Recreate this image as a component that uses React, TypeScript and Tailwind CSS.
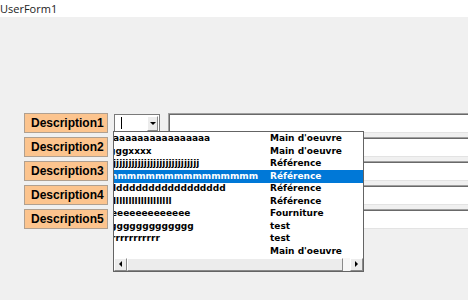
import React from "react";

const rows = [
  { left: "aaaaaaaaaaaaaaaa", shift: "-ml-[1px]", right: "Main d'oeuvre" },
  { left: "gggxxxx", shift: "-ml-[5px]", right: "Main d'oeuvre" },
  { left: "jjjjjjjjjjjjjjjjjjjjjjjjjjjj", shift: "-ml-[1px]", right: "Référence" },
  { left: "mmmmmmmmmmmmmmmm", shift: "-ml-[6px]", right: "Référence", selected: true },
  { left: "lddddddddddddddddd", shift: "-ml-[1px]", right: "Référence" },
  { left: "lllllllllllllllllll", shift: "-ml-[1px]", right: "Référence" },
  { left: "eeeeeeeeeeeee", shift: "-ml-[3px]", right: "Fourniture" },
  { left: "ggggggggggggg", shift: "-ml-[4px]", right: "test" },
  { left: "rrrrrrrrrrr", shift: "-ml-[3px]", right: "test" },
  { left: "", shift: "", right: "Main d'oeuvre" },
];

function Label({ text }: { text: string }) {
  return (
    <div className="w-[84px] h-[20px] shrink-0 bg-[#fcc48e] border border-[#b0a090] pl-[6px] flex items-center font-['Liberation_Sans',Arial,sans-serif] font-bold text-[12px] text-black">
      {text}
    </div>
  );
}

function TextBox() {
  return (
    <div className="w-[320px] h-[20px] shrink-0 bg-white border-t border-l border-t-[#a0a0a0] border-l-[#a0a0a0] border-b border-r border-b-[#e3e3e3] border-r-[#e3e3e3] shadow-[inset_1px_1px_0_#696969]" />
  );
}

export default function App() {
  return (
    <div className="w-[468px] h-[300px] overflow-hidden flex flex-col">
      {/* title bar */}
      <div className="h-[17px] bg-white flex items-center font-['Open_Sans','Noto_Sans',sans-serif] text-[11px] text-[#222] leading-none">
        UserForm1
      </div>

      {/* form body */}
      <div className="relative flex-1 bg-[#f0f0f0] pt-[96px] pl-[24px]">
        <div className="flex flex-col gap-[4px]">
          <div className="flex items-center">
            <Label text="Description1" />
            <div className="ml-[6px] w-[46px] h-[19px] shrink-0 bg-white border border-[#7a7a7a] flex items-center justify-between pl-[6px] pr-[1px]">
              <div className="w-px h-[12px] bg-black" />
              <div className="w-[11px] h-[15px] bg-[#ececec] border border-t-white border-l-white border-b-[#8a8a8a] border-r-[#8a8a8a] flex items-center justify-center">
                <div className="w-0 h-0 border-l-[3px] border-r-[3px] border-t-[3px] border-l-transparent border-r-transparent border-t-black" />
              </div>
            </div>
            <div className="ml-[8px] shrink-0">
              <TextBox />
            </div>
          </div>
          {["Description2", "Description3", "Description4", "Description5"].map((t) => (
            <div key={t} className="flex items-center">
              <Label text={t} />
              <div className="ml-[60px] shrink-0">
                <TextBox />
              </div>
            </div>
          ))}
        </div>

        {/* open dropdown list */}
        <div className="absolute left-[113px] top-[114px] w-[251px] h-[141px] bg-white border border-[#646464] flex flex-col font-['DejaVu_Sans',Verdana,sans-serif] font-bold text-[9px] text-black">
          <div className="flex-1 flex flex-col pt-[0.5px]">
            {rows.map((r, i) => (
              <div
                key={i}
                className={`h-[12.5px] flex items-center leading-none ${r.selected ? "bg-[#0078d7] text-white" : ""}`}
              >
                <div className="w-[156px] shrink-0 overflow-hidden whitespace-nowrap">
                  <span className={`inline-block ${r.shift}`}>{r.left}</span>
                </div>
                <div className="whitespace-nowrap">{r.right}</div>
              </div>
            ))}
          </div>

          {/* horizontal scrollbar */}
          <div className="h-[14px] flex items-stretch bg-[#f7f7f7]">
            <div className="w-[13px] bg-[#ececec] border border-t-white border-l-white border-b-[#8a8a8a] border-r-[#8a8a8a] flex items-center justify-center">
              <div className="w-0 h-0 border-t-[3px] border-b-[3px] border-r-[3px] border-t-transparent border-b-transparent border-r-black" />
            </div>
            <div className="w-[216px] bg-[#ececec] border border-t-white border-l-white border-b-[#8a8a8a] border-r-[#8a8a8a]" />
            <div className="flex-1" />
            <div className="w-[13px] bg-[#ececec] border border-t-white border-l-white border-b-[#8a8a8a] border-r-[#8a8a8a] flex items-center justify-center">
              <div className="w-0 h-0 border-t-[3px] border-b-[3px] border-l-[3px] border-t-transparent border-b-transparent border-l-black" />
            </div>
          </div>
        </div>
      </div>
    </div>
  );
}
